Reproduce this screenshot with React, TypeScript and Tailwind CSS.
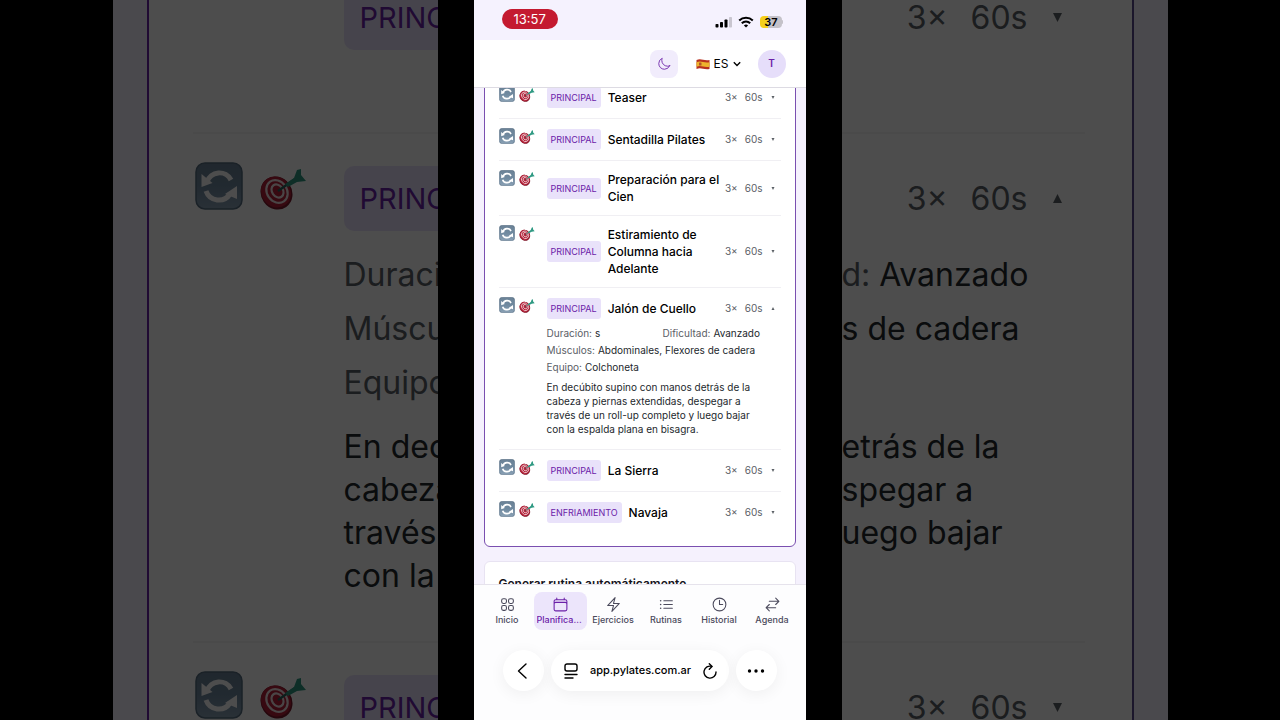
import React, { useState } from 'react';
import {
    HiOutlineArrowsRightLeft,
    HiOutlineBolt,
    HiOutlineCalendar,
    HiOutlineClock,
    HiOutlineListBullet,
    HiOutlineMoon,
    HiOutlineSquares2X2,
} from 'react-icons/hi2';

type Exercise = {
    name: string;
    phase: string;
    details?: {
        duration: string;
        difficulty: string;
        muscles: string;
        equipment: string;
        description: string;
    };
};

const exercises: Exercise[] = [
    { name: 'Teaser', phase: 'PRINCIPAL' },
    { name: 'Sentadilla Pilates', phase: 'PRINCIPAL' },
    { name: 'Preparación para el Cien', phase: 'PRINCIPAL' },
    { name: 'Estiramiento de Columna hacia Adelante', phase: 'PRINCIPAL' },
    {
        name: 'Jalón de Cuello',
        phase: 'PRINCIPAL',
        details: {
            duration: 's',
            difficulty: 'Avanzado',
            muscles: 'Abdominales, Flexores de cadera',
            equipment: 'Colchoneta',
            description:
                'En decúbito supino con manos detrás de la cabeza y piernas extendidas, despegar a través de un roll-up completo y luego bajar con la espalda plana en bisagra.',
        },
    },
    { name: 'La Sierra', phase: 'PRINCIPAL' },
    { name: 'Navaja', phase: 'ENFRIAMIENTO' },
];

const tabs = [
    { label: 'Inicio', icon: HiOutlineSquares2X2 },
    { label: 'Planificador', icon: HiOutlineCalendar },
    { label: 'Ejercicios', icon: HiOutlineBolt },
    { label: 'Rutinas', icon: HiOutlineListBullet },
    { label: 'Historial', icon: HiOutlineClock },
    { label: 'Agenda', icon: HiOutlineArrowsRightLeft },
];

const SwapIcon = ({ className }: { className: string }) => (
    <svg viewBox="0 0 48 48" className={className} aria-hidden="true">
        <defs>
            <linearGradient id="swap" x1="0" y1="0" x2="0" y2="1">
                <stop offset="0" stopColor="#6b8296" />
                <stop offset="0.5" stopColor="#6f899f" />
                <stop offset="1" stopColor="#8aa1b5" />
            </linearGradient>
        </defs>
        <rect x="1" y="1" width="46" height="46" rx="9" fill="url(#swap)" stroke="#566d80" strokeWidth="1.5" />
        <path d="M12 20A13 13 0 0 1 36 18" fill="none" stroke="#fff" strokeWidth="5" />
        <path d="M6.500 12v13l11-4z" fill="#fff" />
        <path d="M11 29A13.500 13.500 0 0 0 35 32" fill="none" stroke="#fff" strokeWidth="5" />
        <path d="M42 24v13l-12-5z" fill="#fff" />
    </svg>
);

const TargetIcon = ({ className }: { className: string }) => (
    <svg viewBox="0 0 48 48" className={className} aria-hidden="true">
        <ellipse cx="17.500" cy="31" rx="15.500" ry="17" transform="rotate(-35 17.500 31)" fill="#7c1a2b" />
        <ellipse cx="17" cy="30" rx="14.500" ry="16" transform="rotate(-35 17 30)" fill="#b52038" />
        <ellipse cx="18" cy="29.500" rx="10" ry="12" transform="rotate(-35 18 29.500)" fill="none" stroke="#f3e4e6" strokeWidth="2.200" />
        <ellipse cx="18.500" cy="29" rx="5.500" ry="7" transform="rotate(-35 18.500 29)" fill="none" stroke="#f3e4e6" strokeWidth="2.200" />
        <path d="M19 29 36 17" stroke="#25655c" strokeWidth="2.200" />
        <path d="m26 22 9-6 3-8 4-1v6l5 6-9 1-9 5z" fill="#2f9a83" />
    </svg>
);

const Triangle = ({ open, className }: { open: boolean; className: string }) => (
    <svg viewBox="0 0 10 10" className={className} fill="currentColor" aria-hidden="true">
        <path d={open ? 'M5 0l5 10H0z' : 'M0 0h10L5 10z'} />
    </svg>
);

const ExerciseRow = ({ exercise }: { exercise: Exercise }) => {
    const [open, setOpen] = useState(Boolean(exercise.details));
    const { name, phase, details } = exercise;

    return (
        <li className="flex border-b border-[#f0eff3] pt-[9px] pb-2.5 last:border-b-0">
            <div className="flex w-12 shrink-0 gap-1">
                <SwapIcon className="h-4 w-4" />
                <TargetIcon className="h-4 w-4" />
            </div>
            <div className="mt-px min-w-0 flex-1 pr-1.5">
                <button type="button" aria-expanded={open} onClick={() => setOpen(!open)} className="flex w-full items-center gap-1 text-left">
                    <span className="flex flex-1 items-center gap-[7px]">
                        <span className="rounded-[3px] bg-[#e9e2fa] px-1 text-[9px] leading-[21px] text-[#6b21a8]">{phase}</span>
                        <span className="flex-1 text-xs leading-[17px] font-medium text-black">{name}</span>
                    </span>
                    <span className="flex items-center gap-[7px] text-[10px] text-[#5b6066]">
                        <span>3×</span>
                        <span>60s</span>
                        <Triangle open={open} className="ml-px h-[3px] w-1" />
                    </span>
                </button>
                {open && details && (
                    <div className="pt-1.5 pb-[3px] text-[10px] leading-[17px] text-[#23282d]">
                        <dl className="grid grid-cols-2 gap-x-1">
                            <div className="flex gap-[3px]">
                                <dt className="text-[#5b6066]">Duración:</dt>
                                <dd>{details.duration}</dd>
                            </div>
                            <div className="flex gap-[3px]">
                                <dt className="text-[#5b6066]">Dificultad:</dt>
                                <dd>{details.difficulty}</dd>
                            </div>
                            <div className="col-span-2 flex gap-[3px]">
                                <dt className="text-[#5b6066]">Músculos:</dt>
                                <dd>{details.muscles}</dd>
                            </div>
                            <div className="col-span-2 flex gap-[3px]">
                                <dt className="text-[#5b6066]">Equipo:</dt>
                                <dd>{details.equipment}</dd>
                            </div>
                        </dl>
                        <p className="mt-1 pr-2 leading-[14px]">{details.description}</p>
                    </div>
                )}
            </div>
        </li>
    );
};

const BackdropBadge = () => (
    <span className="rounded-l-[10px] bg-[#e9e2fa] pl-4 text-[29px] leading-[65px] text-[#6b21a8]">PRINC</span>
);

const BackdropIcons = () => (
    <div className="-mt-1 flex w-[149px] shrink-0 gap-4">
        <SwapIcon className="h-12 w-12" />
        <TargetIcon className="h-12 w-12" />
    </div>
);

const BackdropMeta = ({ open }: { open: boolean }) => (
    <div className="flex items-center justify-end gap-[23px] text-[32px] leading-[65px] text-[#5b6066]">
        <span>3×</span>
        <span>60s</span>
        <Triangle open={open} className="ml-0.5 h-[9px] w-[9px]" />
    </div>
);

// Enlarged, dimmed list on the left of the phone
const LeftBackdrop = () => (
    <div className="max-w-[325px] flex-1 overflow-hidden bg-[#f5f1fd] pl-[34px] whitespace-nowrap opacity-30" aria-hidden="true">
        <div className="h-full overflow-hidden border-l-2 border-[#6b21a8] bg-white pl-11">
            <div className="-mt-[15px] flex flex-col border-b-2 border-[#f4f3f6] pb-[82px] pl-[151px]">
                <BackdropBadge />
            </div>
            <div className="flex border-b-2 border-[#f4f3f6] pt-8 pb-11 pl-0.5">
                <BackdropIcons />
                <div className="flex flex-1 flex-col text-[32px] text-[#23282d]">
                    <BackdropBadge />
                    <div className="mt-[17px] leading-[54px] text-[#5b6066]">
                        <p>Duraci</p>
                        <p>Múscu</p>
                        <p>Equipo</p>
                    </div>
                    <div className="mt-[15px] leading-[43px]">
                        <p>En dec</p>
                        <p>cabeza</p>
                        <p>través</p>
                        <p>con la</p>
                    </div>
                </div>
            </div>
            <div className="flex pt-8 pl-0.5">
                <BackdropIcons />
                <div className="flex flex-1 flex-col">
                    <BackdropBadge />
                </div>
            </div>
        </div>
    </div>
);

// Same list continued on the right
const RightBackdrop = () => (
    <div className="max-w-[326px] flex-1 overflow-hidden bg-[#f5f1fd] pr-[34px] whitespace-nowrap opacity-30" aria-hidden="true">
        <div className="h-full overflow-hidden border-r-2 border-[#5b4a90] bg-white pr-[47px]">
            <div className="-mt-[15px] border-b-2 border-[#f4f3f6] pr-[23px] pb-[82px]">
                <BackdropMeta open={false} />
            </div>
            <div className="border-b-2 border-[#f4f3f6] pt-8 pr-[23px] pb-11 text-[32px] text-[#23282d]">
                <BackdropMeta open />
                <div className="mt-[17px] leading-[54px]">
                    <p><span className="text-[#5b6066]">d:</span> Avanzado</p>
                    <p>s de cadera</p>
                </div>
                <div className="mt-[69px] leading-[43px]">
                    <p>etrás de la</p>
                    <p>spegar a</p>
                    <p>uego bajar</p>
                </div>
                <div className="h-[43px]" />
            </div>
            <div className="pt-8 pr-[23px]">
                <BackdropMeta open={false} />
            </div>
        </div>
    </div>
);

const StatusBar = () => (
    <div className="flex h-10 shrink-0 items-start justify-between bg-[#f5f2fe] pr-[23px] pl-7">
        <span className="mt-[9px] rounded-full bg-[#c41a30] px-3 text-[13px] leading-5 text-white">13:57</span>
        <div className="mt-4 flex items-center gap-1.5">
            <svg viewBox="0 0 17 12" className="h-3 w-[17px]" aria-hidden="true">
                <rect x="0.5" y="8" width="3" height="3.5" rx="0.8" />
                <rect x="5" y="6" width="3" height="5.5" rx="0.8" />
                <rect x="9.5" y="3.5" width="3" height="8" rx="0.8" />
                <rect x="14" y="1" width="3" height="10.5" rx="0.8" fill="#c9c6d0" />
            </svg>
            <svg viewBox="0 0 16 12" className="h-3 w-4" fill="none" stroke="#000" strokeWidth="2" aria-hidden="true">
                <path d="M1.2 4.500C5 0.800 11 0.800 14.800 4.500" />
                <path d="M3.800 7.300c2.400-2.400 6-2.400 8.400 0" />
                <path d="M8 11.500 5.900 9.400c1.200-1.100 3-1.100 4.200 0z" fill="#000" stroke="none" />
            </svg>
            <span className="flex items-center">
                <span className="rounded bg-linear-to-r from-[#f5cf1b] from-37% to-[#c4c2c9] to-37% px-1 text-[11px] leading-3 font-semibold text-black">37</span>
                <span className="h-1 w-px rounded-r bg-[#c4c2c9]" />
            </span>
        </div>
    </div>
);

const Header = () => (
    <header className="flex h-12 shrink-0 items-center justify-end border-b border-[#dddbe3] bg-white pr-5">
        <button type="button" aria-label="Modo oscuro" className="flex h-7 w-7 items-center justify-center rounded-lg bg-[#f1ecfc] text-[#6b21a8]">
            <HiOutlineMoon className="h-3.5 w-3.5" />
        </button>
        <label className="ml-[18px] flex items-center gap-1 text-xs text-black">
            <svg viewBox="0 0 14 12" className="h-3 w-3.5" aria-hidden="true">
                <path d="M0.500 2c4.500-2 7 1 13 0v9c-6 1-8.500-2-13 0z" fill="#b8301f" />
                <path d="M0.500 4.200c4.500-2 7 1 13 0v4.500c-6 1-8.500-2-13 0z" fill="#eeb32c" />
                <rect x="3" y="4.500" width="2.500" height="3" rx="0.500" fill="#b4572a" />
            </svg>
            <select aria-label="Idioma" defaultValue="ES" className="field-sizing-content appearance-none bg-transparent">
                <option>ES</option>
            </select>
            <svg viewBox="0 0 8 8" className="h-2 w-2" fill="none" stroke="#000" strokeWidth="1.4" aria-hidden="true">
                <path d="m0.800 2.300 3.200 3.200 3.200-3.200" />
            </svg>
        </label>
        <button type="button" aria-label="Perfil" className="ml-[17px] h-7 w-7 rounded-full bg-[#e6defa] text-[10px] font-semibold text-[#6b21a8]">
            T
        </button>
    </header>
);

const TabBar = () => (
    <nav className="grid shrink-0 grid-cols-6 border-t border-[#e6e3ec] px-[7px] pt-[7px]">
        {tabs.map(({ label, icon: Icon }, i) => (
            <a
                key={label}
                href="#"
                className={`flex min-w-0 flex-col items-center rounded-lg px-[3px] pt-1 pb-[3px] ${i === 1 ? 'bg-[#ece5fb] text-[#6b21a8]' : 'text-[#4b4a5c]'}`}
            >
                <Icon className="h-[17px] w-[17px]" />
                <span className="w-full truncate text-center text-[9px] leading-[14px] font-medium">{label}</span>
            </a>
        ))}
    </nav>
);

const BrowserBar = () => (
    <div className="flex shrink-0 gap-[7px] px-[29px] pt-5 pb-[29px]">
        <button type="button" aria-label="Atrás" className="flex h-[41px] w-[41px] items-center justify-center rounded-full bg-white shadow-[0_3px_16px_rgba(0,0,0,0.06)]">
            <svg viewBox="0 0 13 16" className="h-4 w-[13px]" fill="none" stroke="#000" strokeWidth="1.400" strokeLinecap="round" strokeLinejoin="round" aria-hidden="true">
                <path d="M9 1 1.500 8 9 15" />
            </svg>
        </button>
        <div className="flex flex-1 items-center justify-between rounded-full bg-white px-3 shadow-[0_3px_16px_rgba(0,0,0,0.06)]">
            <button type="button" aria-label="Ajustes de página">
                <svg viewBox="0 0 16 16" className="h-4 w-4" fill="none" stroke="#000" strokeWidth="1.400" strokeLinecap="round" aria-hidden="true">
                    <rect x="2" y="1" width="12" height="7" rx="2" />
                    <path d="M2 11.500h12M2 15h8" />
                </svg>
            </button>
            <span className="text-[11px] font-medium text-black">app.pylates.com.ar</span>
            <button type="button" aria-label="Recargar">
                <svg viewBox="0 0 14 16" className="h-4 w-3.5" fill="none" stroke="#000" strokeWidth="1.400" strokeLinecap="round" strokeLinejoin="round" aria-hidden="true">
                    <path d="M8.800 3.400A6 6 0 1 0 13 9" />
                    <path d="M6.300 0.800 9 3.500 6.300 6.200" />
                </svg>
            </button>
        </div>
        <button type="button" aria-label="Más" className="flex h-[41px] w-[41px] items-center justify-center rounded-full bg-white shadow-[0_3px_16px_rgba(0,0,0,0.06)]">
            <svg viewBox="0 0 18 4" className="h-1 w-[18px]" aria-hidden="true">
                <circle cx="2.500" cy="2" r="1.700" />
                <circle cx="9" cy="2" r="1.700" />
                <circle cx="15.500" cy="2" r="1.700" />
            </svg>
        </button>
    </div>
);

export default function App() {
    return (
        <div className="flex h-screen justify-center overflow-hidden bg-black font-['Inter',sans-serif]">
            <LeftBackdrop />
            <div className="w-full max-w-[404px] shrink-0 px-9">
                <div className="flex h-full flex-col bg-[#fdfdfe]">
                    <StatusBar />
                    <Header />
                    <main className="min-h-0 flex-1 overflow-hidden bg-[#f5f1fd] px-2.5">
                        <section className="-mt-6 rounded-md border border-[#7a4fb0] bg-white px-3.5 pt-3 pb-[13px]">
                            <ul>
                                {exercises.map((exercise) => (
                                    <ExerciseRow key={exercise.name} exercise={exercise} />
                                ))}
                            </ul>
                        </section>
                        <section className="mt-3.5 rounded-md border border-[#e8e3f2] bg-white p-3.5">
                            <h2 className="text-xs font-semibold text-[#15131c]">Generar rutina automáticamente</h2>
                        </section>
                    </main>
                    <TabBar />
                    <BrowserBar />
                </div>
            </div>
            <RightBackdrop />
        </div>
    );
}
